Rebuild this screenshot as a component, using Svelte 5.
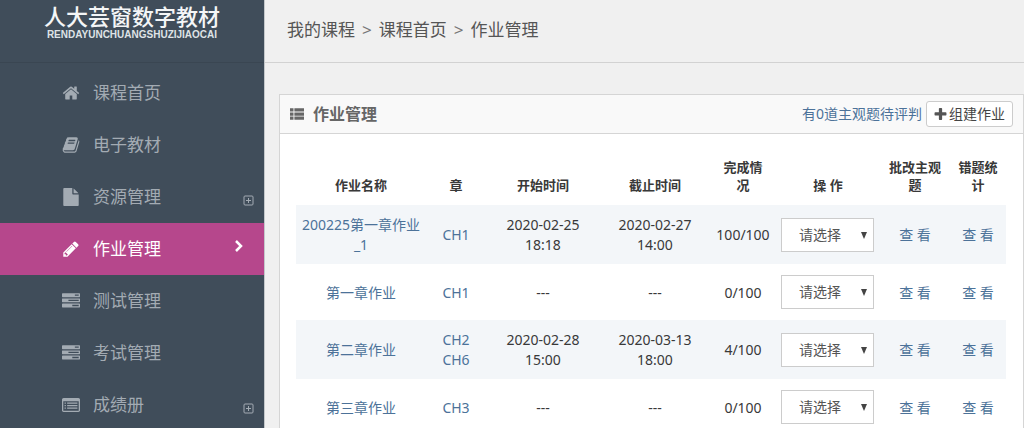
<script lang="ts">
    const icons = {
        home: "M1472 992v480q0 26-19 45t-45 19h-384v-384h-256v384h-384q-26 0-45-19t-19-45v-480q0-1 .5-3t.5-3l575-474 575 474q1 2 1 6zm223-69l-62 74q-8 9-21 11h-3q-13 0-21-7l-692-577-692 577q-12 8-24 7-13-2-21-11l-62-74q-8-10-7-23.5t11-21.5l719-599q32-26 76-26t76 26l244 204v-195q0-14 9-23t23-9h192q14 0 23 9t9 23v408l219 182q10 8 11 21.5t-7 23.5z",
        book: "M1703 478q40 57 18 129l-275 906q-19 64-76.5 107.5t-122.5 43.5h-923q-77 0-148.5-53.5t-99.5-131.5q-24-67-2-127 0-4 3-27t4-37q1-8-3-21.5t-3-19.5q2-11 8-21t16.5-23.5 16.5-23.5q23-38 45-91.5t30-91.5q3-10 .5-30t-.5-28q3-11 17-28t17-23q21-36 42-92t25-90q1-9-2.5-32t.5-28q4-13 22-30.5t22-22.5q19-26 42.5-84.5t27.5-96.5q1-8-3-25.5t-2-26.5q2-8 9-18t18-23 17-21q8-12 16.5-30.5t15-35 16-36 19.5-32 26.5-23.5 36-11.5 47.5 5.5l-1 3q38-9 51-9h761q74 0 114 56t18 130l-274 906q-36 119-71.5 153.5t-128.5 34.5h-869q-27 0-38 15-11 16-1 43 24 70 144 70h923q29 0 56-15.5t35-41.5l300-987q7-22 5-57 38 15 59 43zm-1064 2q-4 13 2 22.5t20 9.5h608q13 0 25.5-9.5t16.5-22.5l21-64q4-13-2-22.5t-20-9.5h-608q-13 0-25.5 9.5t-16.5 22.5zm-83 256q-4 13 2 22.5t20 9.5h608q13 0 25.5-9.5t16.5-22.5l21-64q4-13-2-22.5t-20-9.5h-608q-13 0-25.5 9.5t-16.5 22.5z",
        file: "M1152 512v-472q22 14 36 28l408 408q14 14 28 36h-472zm-128 32q0 40 28 68t68 28h544v1056q0 40-28 68t-68 28h-1344q-40 0-68-28t-28-68v-1600q0-40 28-68t68-28h800v544z",
        pencil: "M491 1536l91-91-235-235-91 91v107h128v128h107zm523-928q0-22-22-22-10 0-17 7l-542 542q-7 7-7 17 0 22 22 22 10 0 17-7l542-542q7-7 7-17zm-54-192l416 416-832 832h-416v-416zm683 96q0 53-37 90l-166 166-416-416 166-165q36-38 90-38 53 0 91 38l235 234q37 39 37 91z",
        tasks: "M1024 1408h640v-128h-640v128zm-384-512h1024v-128h-1024v128zm640-512h384v-128h-384v128zm512 832v256q0 26-19 45t-45 19h-1664q-26 0-45-19t-19-45v-256q0-26 19-45t45-19h1664q26 0 45 19t19 45zm0-512v256q0 26-19 45t-45 19h-1664q-26 0-45-19t-19-45v-256q0-26 19-45t45-19h1664q26 0 45 19t19 45zm0-512v256q0 26-19 45t-45 19h-1664q-26 0-45-19t-19-45v-256q0-26 19-45t45-19h1664q26 0 45 19t19 45z",
        listAlt: "M160 192h1472q66 0 113 47t47 113v1088q0 66-47 113t-113 47h-1472q-66 0-113-47t-47-113v-1088q0-66 47-113t113-47zM128 512v928q0 32 32 32h1472q32 0 32-32v-928zM256 640h128v128h-128zM256 896h128v128h-128zM256 1152h128v128h-128zM512 640h1024v128h-1024zM512 896h1024v128h-1024zM512 1152h1024v128h-1024z",
        thList: "M0 160h448v416h-448zM560 160h1232v416h-1232zM0 688h448v416h-448zM560 688h1232v416h-1232zM0 1216h448v416h-448zM560 1216h1232v416h-1232z",
        plus: "M1600 736v192q0 40-28 68t-68 28h-416v416q0 40-28 68t-68 28h-192q-40 0-68-28t-28-68v-416h-416q-40 0-68-28t-28-68v-192q0-40 28-68t68-28h416v-416q0-40 28-68t68-28h192q40 0 68 28t28 68v416h416q40 0 68 28t28 68z",
    };

    let active = "作业管理";

    const menu = [
        { name: "课程首页", icon: icons.home },
        { name: "电子教材", icon: icons.book },
        { name: "资源管理", icon: icons.file, more: true },
        { name: "作业管理", icon: icons.pencil },
        { name: "测试管理", icon: icons.tasks },
        { name: "考试管理", icon: icons.tasks },
        { name: "成绩册", icon: icons.listAlt, more: true },
    ];

    const homework = [
        { name: "200225第一章作业_1", chapters: ["CH1"], start: "2020-02-25 18:18", end: "2020-02-27 14:00", done: "100/100" },
        { name: "第一章作业", chapters: ["CH1"], start: "---", end: "---", done: "0/100" },
        { name: "第二章作业", chapters: ["CH2", "CH6"], start: "2020-02-28 15:00", end: "2020-03-13 18:00", done: "4/100" },
        { name: "第三章作业", chapters: ["CH3"], start: "---", end: "---", done: "0/100" },
    ];
</script>

<div class="layout">
    <aside class="sidebar">
        <div class="logo">
            <div class="logo-name">人大芸窗数字教材</div>
            <div class="logo-pinyin">RENDAYUNCHUANGSHUZIJIAOCAI</div>
        </div>
        <nav class="menu">
            {#each menu as item}
                <a href="#top" class="menu-item" class:active={item.name === active} on:click={() => (active = item.name)}>
                    <svg class="icon" viewBox="0 0 1792 1792"><path fill-rule="evenodd" d={item.icon} /></svg>
                    <span class="menu-name">{item.name}</span>
                    {#if item.name === active}
                        <svg class="chevron" viewBox="0 0 10 14"><path d="M2 2l5 5-5 5" /></svg>
                    {:else if item.more}
                        <svg class="more" viewBox="0 0 11 11"><rect x="1" y="1" width="9" height="9" rx="1" /><path d="M3 5.5h5M5.5 3v5" /></svg>
                    {/if}
                </a>
            {/each}
        </nav>
    </aside>

    <main class="main">
        <div class="breadcrumb">
            <a href="#top">我的课程</a>
            <span>&gt;</span>
            <a href="#top">课程首页</a>
            <span>&gt;</span>
            <a href="#top">作业管理</a>
        </div>

        <section class="panel">
            <header class="panel-head">
                <svg class="list-icon" viewBox="0 0 1792 1792"><path d={icons.thList} /></svg>
                <h1>作业管理</h1>
                <a href="#top" class="link">有0道主观题待评判</a>
                <button class="btn">
                    <svg class="plus" viewBox="128 128 1536 1536"><path d={icons.plus} /></svg>组建作业
                </button>
            </header>
            <div class="panel-body">
                <table>
                    <colgroup>
                        <col class="col-name" />
                        <col class="col-chapter" />
                        <col class="col-start" />
                        <col class="col-end" />
                        <col class="col-done" />
                        <col class="col-action" />
                        <col class="col-review" />
                        <col class="col-stats" />
                    </colgroup>
                    <thead>
                        <tr>
                            <th>作业名称</th>
                            <th>章</th>
                            <th>开始时间</th>
                            <th>截止时间</th>
                            <th>完成情况</th>
                            <th>操 作</th>
                            <th>批改主观题</th>
                            <th>错题统计</th>
                        </tr>
                    </thead>
                    <tbody>
                        {#each homework as row}
                            <tr>
                                <td><a href="#top" class="link">{row.name}</a></td>
                                <td>
                                    {#each row.chapters as chapter}
                                        <a href="#top" class="link chapter">{chapter}</a>
                                    {/each}
                                </td>
                                <td>{row.start}</td>
                                <td>{row.end}</td>
                                <td>{row.done}</td>
                                <td class="action">
                                    <div class="select-box">
                                        <select aria-label="操作">
                                            <option>请选择</option>
                                        </select>
                                    </div>
                                </td>
                                <td><a href="#top" class="link">查 看</a></td>
                                <td><a href="#top" class="link">查 看</a></td>
                            </tr>
                        {/each}
                    </tbody>
                </table>
            </div>
        </section>
    </main>
</div>

<style>
    :global(body) {
        background-color: #f0f0f0;
    }

    .layout {
        display: flex;
        height: 100vh;
        overflow: hidden;
        font-family: "Noto Sans", "Noto Sans CJK SC", sans-serif;
        font-size: 14px;
        line-height: 20px;
        color: #393939;
    }

    a {
        color: inherit;
        text-decoration: none;
    }

    .link {
        color: #4c7299;
    }

    .sidebar {
        flex: 0 0 264px;
        background-color: #404d5a;
        border-right: 1px solid #c4c8cb;
    }

    .logo {
        box-sizing: border-box;
        height: 63px;
        padding-top: 3px;
        border-bottom: 1px solid #3a4652;
        text-align: center;
        color: #f4f6f7;
    }

    .logo-name {
        font-family: "Noto Sans CJK SC", sans-serif;
        font-size: 22px;
        font-weight: 500;
        line-height: 24px;
    }

    .logo-pinyin {
        margin-top: 3px;
        font-family: "Liberation Sans", sans-serif;
        font-size: 10px;
        font-weight: bold;
        line-height: 10px;
        color: #dfe3e6;
    }

    .menu {
        padding-top: 4px;
    }

    .menu-item {
        display: flex;
        align-items: center;
        height: 52px;
        padding: 0 10px 0 62px;
        font-size: 17px;
        color: #a3abb3;
    }

    .menu-item.active {
        background-color: #b6478c;
        color: #fff;
    }

    .menu-name {
        flex: 1;
    }

    .icon {
        width: 18px;
        height: 18px;
        margin-right: 13px;
        fill: currentColor;
    }

    .chevron {
        width: 10px;
        height: 14px;
        margin: 0 10px 6px 0;
        fill: none;
        stroke: currentColor;
        stroke-width: 2.5;
    }

    .more {
        width: 11px;
        height: 11px;
        margin-top: 6px;
        fill: none;
        stroke: currentColor;
    }

    .main {
        flex: 1;
        min-width: 0;
    }

    .breadcrumb {
        display: flex;
        gap: 7px;
        padding: 20px 22px 22px;
        border-bottom: 1px solid #d2d2d2;
        font-size: 17px;
        color: #555;
    }

    .breadcrumb span {
        color: #777;
    }

    .panel {
        margin: 31px 0 0 14px;
        border: 1px solid #d5d5d5;
        background-color: #fff;
    }

    .panel-head {
        display: flex;
        align-items: center;
        height: 38px;
        padding: 0 10px;
        border-bottom: 1px solid #d5d5d5;
        background-color: #f9f9f9;
    }

    .list-icon {
        width: 14px;
        height: 14px;
        fill: #666;
    }

    h1 {
        flex: 1;
        margin: 0 0 0 9px;
        font-size: 16px;
        color: #666;
    }

    .btn {
        display: flex;
        align-items: center;
        gap: 2px;
        height: 26px;
        margin-left: 4px;
        padding: 0 7px;
        border: 1px solid #ccc;
        border-radius: 3px;
        background-color: #fff;
        font: inherit;
        color: #444;
    }

    .plus {
        width: 13px;
        height: 13px;
        fill: #555;
    }

    .panel-body {
        padding: 16px 17px 16px 16px;
    }

    table {
        width: 100%;
        table-layout: fixed;
        border-collapse: collapse;
        text-align: center;
    }

    .col-name { width: 130px; }
    .col-chapter { width: 60px; }
    .col-start { width: 114px; }
    .col-end { width: 110px; }
    .col-done { width: 66px; }
    .col-action { width: 104px; }
    .col-review { width: 70px; }
    .col-stats { width: 56px; }

    th {
        padding: 8px 8px 11px;
        font-size: 13px;
        line-height: 18px;
        vertical-align: bottom;
    }

    td {
        padding: 10px 4px 9px;
    }

    tbody tr:nth-child(odd) {
        background-color: #f3f6f9;
    }

    .chapter {
        display: block;
    }

    .action {
        padding: 11px 6px 11px 5px;
    }

    .select-box {
        position: relative;
    }

    .select-box::after {
        content: "";
        position: absolute;
        top: 14px;
        right: 7px;
        border: solid transparent;
        border-width: 7px 3px 0;
        border-top-color: #444;
        pointer-events: none;
    }

    select {
        display: block;
        width: 100%;
        height: 34px;
        padding: 0 17px;
        border: 1px solid #ccc;
        border-radius: 0;
        appearance: none;
        background-color: #fff;
        font: inherit;
        color: #555;
    }
</style>
